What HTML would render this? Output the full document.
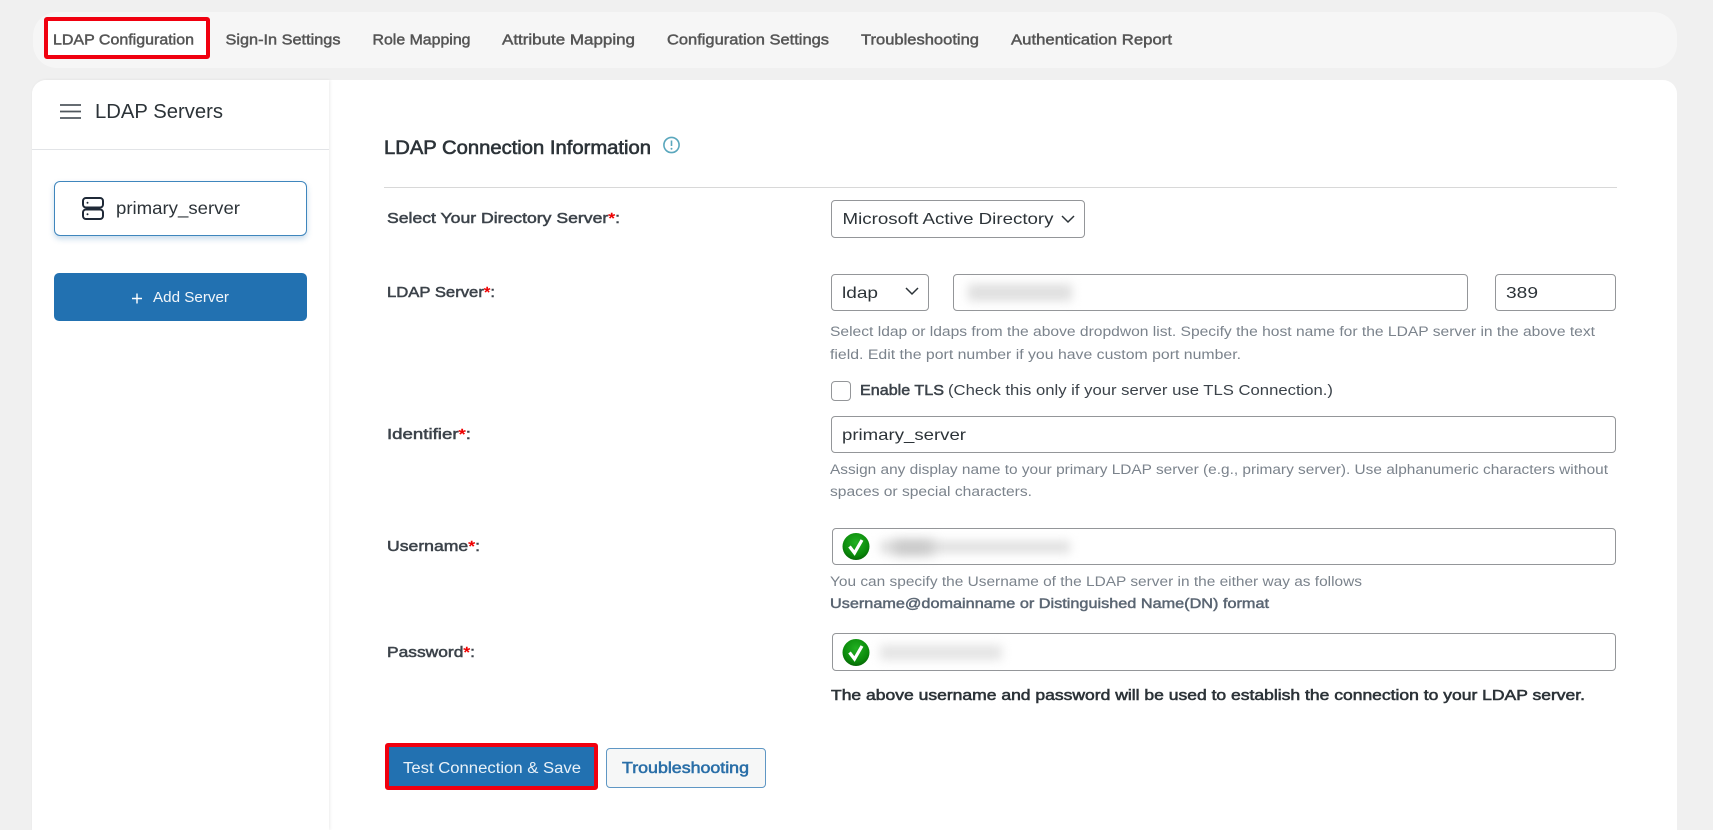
<!DOCTYPE html>
<html lang="en">
<head>
<meta charset="utf-8">
<title>LDAP Configuration</title>
<style>
html,body{margin:0;padding:0;width:1713px;height:830px;overflow:hidden;background:#f0f0f0;font-family:"Liberation Sans",sans-serif}
.a{position:absolute;box-sizing:border-box}
.in{background:#fff;border:1px solid #949699;border-radius:4px}
.blur{background:#dfdfdf;filter:blur(5px)}
svg.t{position:absolute;left:0;top:0;display:block}
svg.t text{font-family:"Liberation Sans",sans-serif;white-space:pre}
.nav{font-size:14.5px;fill:#555;stroke:#555;stroke-width:.45px}
.lab{font-size:14.5px;fill:#3c434a;stroke:#3c434a;stroke-width:.5px}
.help{font-size:13.5px;fill:#7b838c}
.val{font-size:16px;fill:#2c3338}
.red{fill:#e00;stroke:#e00}
</style>
</head>
<body>
<div class="a" style="left:33px;top:12px;width:1644px;height:56px;background:#f6f6f6;border-radius:24px"></div>
<div class="a" style="left:44px;top:17px;width:166px;height:42px;background:#fff;border:4px solid #f0000f;border-radius:3px"></div>

<div class="a" style="left:32px;top:80px;width:1645px;height:750px;background:#fff;border-radius:14px 14px 0 0"></div>
<div class="a" style="left:32px;top:80px;width:297px;height:750px;background:#fff;border-radius:14px 0 0 0;box-shadow:1px 0 3px rgba(0,0,0,.08)"></div>
<div class="a" style="left:32px;top:149px;width:297px;height:1px;background:#e2e4e7"></div>

<div class="a" style="left:54px;top:181px;width:253px;height:55px;background:#fff;border:1px solid #3f86bd;border-radius:6px;box-shadow:0 3px 6px rgba(34,113,177,.25)"></div>
<div class="a" style="left:54px;top:273px;width:253px;height:48px;background:#2271b1;border-radius:5px"></div>

<div class="a" style="left:384px;top:187px;width:1233px;height:1px;background:#d8d8d8"></div>

<div class="a in" style="left:831px;top:200px;width:254px;height:38px"></div>
<div class="a in" style="left:831px;top:274px;width:98px;height:37px"></div>
<div class="a in" style="left:953px;top:274px;width:515px;height:37px"></div>
<div class="a in" style="left:1495px;top:274px;width:121px;height:37px"></div>
<div class="a blur" style="left:968px;top:284px;width:104px;height:17px"></div>
<div class="a" style="left:831px;top:381px;width:20px;height:20px;background:#fff;border:1px solid #949699;border-radius:4px"></div>
<div class="a in" style="left:831px;top:416px;width:785px;height:37px"></div>
<div class="a in" style="left:832px;top:528px;width:784px;height:37px"></div>
<div class="a blur" style="left:880px;top:541px;width:190px;height:12px"></div>
<div class="a" style="left:893px;top:541px;width:40px;height:13px;background:#c4c4c4;filter:blur(6px)"></div>
<div class="a in" style="left:832px;top:633px;width:784px;height:38px"></div>
<div class="a blur" style="left:880px;top:645px;width:122px;height:15px;background:#e4e4e4"></div>

<div class="a" style="left:385px;top:743px;width:213px;height:47px;background:#2271b1;border:4px solid #f0000f;border-radius:3px"></div>
<div class="a" style="left:606px;top:748px;width:160px;height:40px;background:#f6f7f7;border:1px solid #5f97c4;border-radius:4px"></div>

<svg class="t" width="1713" height="830" viewBox="0 0 1713 830" xmlns="http://www.w3.org/2000/svg">
<defs>
<radialGradient id="g" cx="50%" cy="35%" r="68%"><stop offset="0" stop-color="#22b022"/><stop offset=".7" stop-color="#0b8a0b"/><stop offset="1" stop-color="#056105"/></radialGradient>
</defs>
<text class="nav" x="53" y="44.5" textLength="141" lengthAdjust="spacingAndGlyphs">LDAP Configuration</text>
<text class="nav" x="225.5" y="44.5" textLength="115" lengthAdjust="spacingAndGlyphs">Sign-In Settings</text>
<text class="nav" x="372.5" y="44.5" textLength="98" lengthAdjust="spacingAndGlyphs">Role Mapping</text>
<text class="nav" x="502" y="44.5" textLength="133" lengthAdjust="spacingAndGlyphs">Attribute Mapping</text>
<text class="nav" x="667" y="44.5" textLength="162" lengthAdjust="spacingAndGlyphs">Configuration Settings</text>
<text class="nav" x="861" y="44.5" textLength="118" lengthAdjust="spacingAndGlyphs">Troubleshooting</text>
<text class="nav" x="1011" y="44.5" textLength="161" lengthAdjust="spacingAndGlyphs">Authentication Report</text>

<path d="M60 105H81M60 111.5H81M60 118H81" stroke="#50575e" stroke-width="1.7" fill="none"/>
<text x="95" y="118" font-size="20.5" fill="#2c3338" textLength="128" lengthAdjust="spacingAndGlyphs">LDAP Servers</text>

<g fill="none" stroke="#1f2937" stroke-width="2">
<rect x="83" y="198" width="20" height="9.5" rx="3"/>
<rect x="83" y="209.5" width="20" height="9.5" rx="3"/>
</g>
<circle cx="87.5" cy="202.7" r="1" fill="#1f2937"/><circle cx="87.5" cy="214.2" r="1" fill="#1f2937"/>
<text x="116" y="214" font-size="17.5" fill="#2c3338" textLength="124" lengthAdjust="spacingAndGlyphs">primary_server</text>

<path d="M132 298.5H142M137 293.5V303.5" stroke="#fff" stroke-width="1.4"/>
<text x="153" y="302" font-size="15" fill="#f2f6fa" textLength="76" lengthAdjust="spacingAndGlyphs">Add Server</text>

<text x="384" y="154" font-size="19" fill="#2c3338" stroke="#2c3338" stroke-width=".6" textLength="267" lengthAdjust="spacingAndGlyphs">LDAP Connection Information</text>
<circle cx="671.5" cy="145" r="7.6" fill="none" stroke="#5aa7bd" stroke-width="1.6"/>
<path d="M671.5 140.5V146" stroke="#5aa7bd" stroke-width="1.6"/><circle cx="671.5" cy="148.7" r="1" fill="#5aa7bd"/>

<text class="lab" x="387" y="223" textLength="233" lengthAdjust="spacingAndGlyphs">Select Your Directory Server<tspan class="red">*</tspan>:</text>
<text class="lab" x="387" y="297" textLength="108" lengthAdjust="spacingAndGlyphs">LDAP Server<tspan class="red">*</tspan>:</text>
<text class="lab" x="387" y="439" textLength="84" lengthAdjust="spacingAndGlyphs">Identifier<tspan class="red">*</tspan>:</text>
<text class="lab" x="387" y="551" textLength="93" lengthAdjust="spacingAndGlyphs">Username<tspan class="red">*</tspan>:</text>
<text class="lab" x="387" y="657" textLength="88" lengthAdjust="spacingAndGlyphs">Password<tspan class="red">*</tspan>:</text>

<text class="val" x="842.5" y="224" textLength="211" lengthAdjust="spacingAndGlyphs">Microsoft Active Directory</text>
<path d="M1062 216l6 6 6-6" fill="none" stroke="#2c3338" stroke-width="1.5"/>
<text class="val" x="842" y="298" textLength="36" lengthAdjust="spacingAndGlyphs">ldap</text>
<path d="M906 288l6 6 6-6" fill="none" stroke="#2c3338" stroke-width="1.5"/>
<text class="val" x="1506" y="298" textLength="32" lengthAdjust="spacingAndGlyphs">389</text>

<text class="help" x="830" y="336" textLength="765" lengthAdjust="spacingAndGlyphs">Select ldap or ldaps from the above dropdwon list. Specify the host name for the LDAP server in the above text</text>
<text class="help" x="830" y="359" textLength="411" lengthAdjust="spacingAndGlyphs">field. Edit the port number if you have custom port number.</text>

<text x="860" y="395" font-size="14.5" fill="#3c434a" stroke="#3c434a" stroke-width=".5" textLength="84" lengthAdjust="spacingAndGlyphs">Enable TLS</text>
<text x="948" y="395" font-size="14.5" fill="#3c434a" textLength="385" lengthAdjust="spacingAndGlyphs">(Check this only if your server use TLS Connection.)</text>

<text class="val" x="842" y="440" textLength="124" lengthAdjust="spacingAndGlyphs">primary_server</text>
<text class="help" x="830" y="474" textLength="778" lengthAdjust="spacingAndGlyphs">Assign any display name to your primary LDAP server (e.g., primary server). Use alphanumeric characters without</text>
<text class="help" x="830" y="496" textLength="202" lengthAdjust="spacingAndGlyphs">spaces or special characters.</text>

<circle cx="856" cy="546.5" r="13.5" fill="url(#g)"/>
<path d="M849.5 546.5l5 6.5 7.5-13" fill="none" stroke="#fff" stroke-width="3.2"/>
<text class="help" x="830" y="586" textLength="532" lengthAdjust="spacingAndGlyphs">You can specify the Username of the LDAP server in the either way as follows</text>
<text x="830" y="608" font-size="13.5" fill="#5b6673" stroke="#5b6673" stroke-width=".45" textLength="439" lengthAdjust="spacingAndGlyphs">Username@domainname or Distinguished Name(DN) format</text>

<circle cx="856" cy="652.5" r="13.5" fill="url(#g)"/>
<path d="M849.5 652.5l5 6.5 7.5-13" fill="none" stroke="#fff" stroke-width="3.2"/>
<text x="831" y="700" font-size="14.5" fill="#2c3338" stroke="#2c3338" stroke-width=".55" textLength="754" lengthAdjust="spacingAndGlyphs">The above username and password will be used to establish the connection to your LDAP server.</text>

<text x="403" y="773" font-size="15.5" fill="#e8f1f8" textLength="178" lengthAdjust="spacingAndGlyphs">Test Connection &amp; Save</text>
<text x="622" y="773" font-size="15.5" fill="#2a6fa8" stroke="#2a6fa8" stroke-width=".55" textLength="127" lengthAdjust="spacingAndGlyphs">Troubleshooting</text>
</svg>
</body>
</html>
